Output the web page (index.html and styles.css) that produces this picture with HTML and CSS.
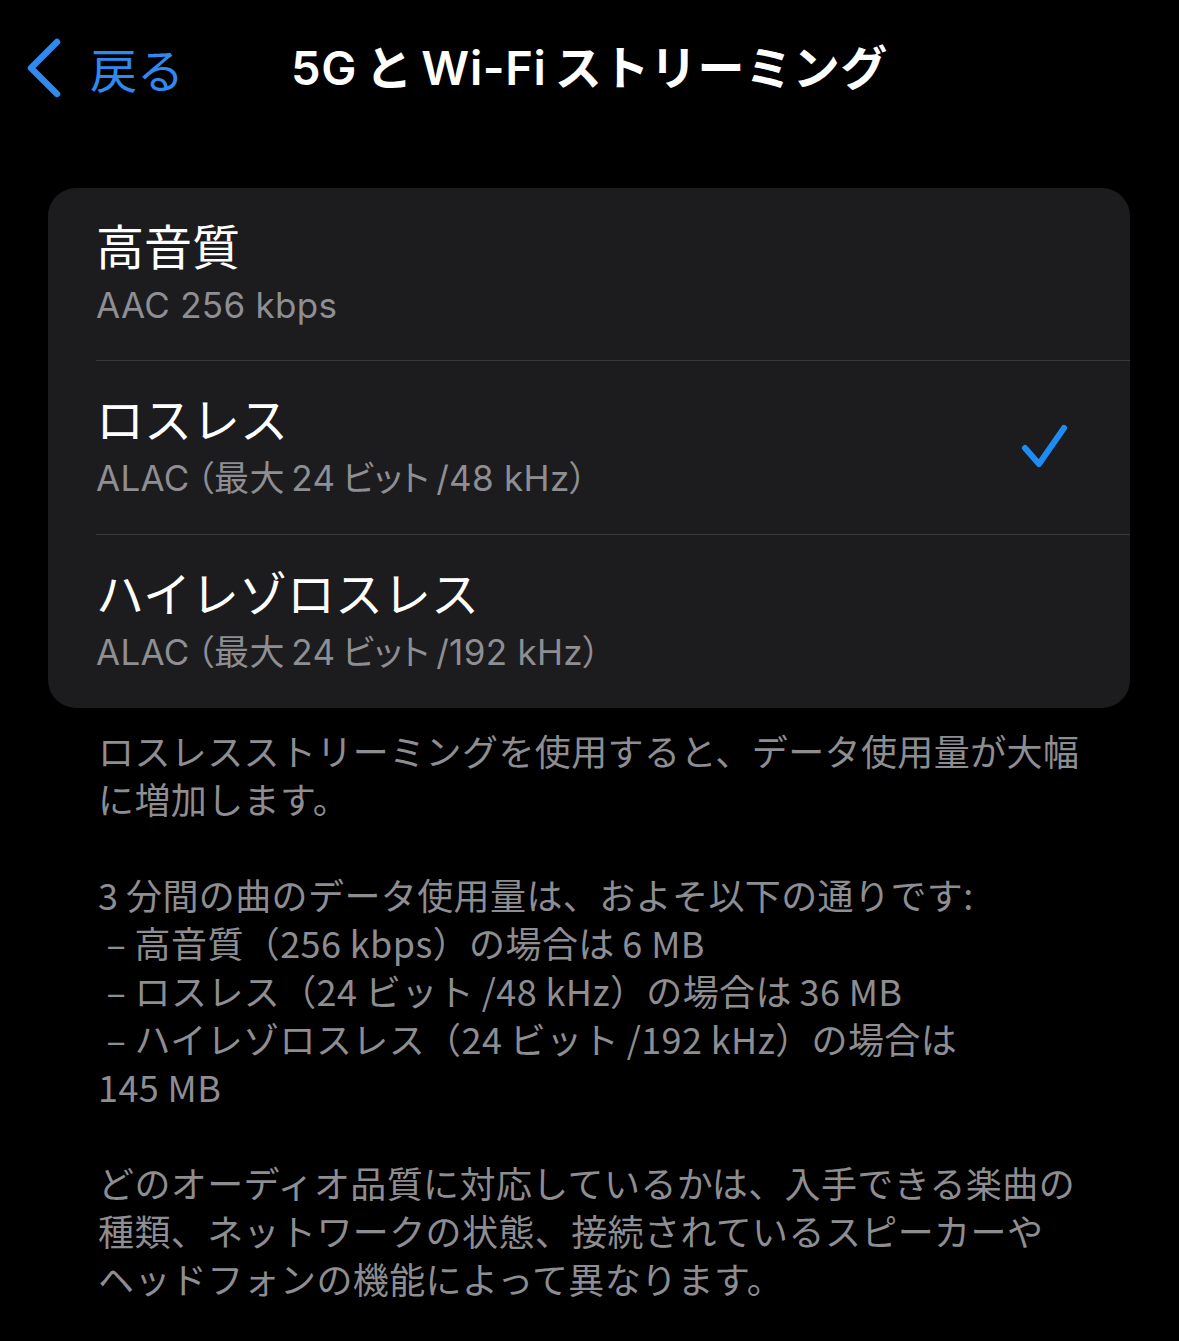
FILE: index.html
```html
<!DOCTYPE html>
<html lang="ja">
<head>
<meta charset="utf-8">
<title>5GとWi-Fiストリーミング</title>
<link rel="stylesheet" href="styles.css">
</head>
<body>
<header class="nav">
  <a class="back">
    <svg class="chevron" width="40" height="60" viewBox="0 0 40 60"><path d="M33 4 L7 30 L33 56" fill="none" stroke="#2f89ee" stroke-width="6.5" stroke-linecap="round" stroke-linejoin="round"/></svg>
    <span class="back-label">戻る</span>
  </a>
  <h1 class="title">5G&#8201;と&#8201;Wi-Fi&#8201;ストリーミング</h1>
</header>

<section class="card">
  <div class="row">
    <div class="row-text">
      <div class="row-title">高音質</div>
      <div class="row-sub">AAC 256 kbps</div>
    </div>
  </div>
  <div class="row">
    <div class="row-text">
      <div class="row-title">ロスレス</div>
      <div class="row-sub">ALAC&#8201;（最大&#8201;24&#8201;ビット&#8201;/48 kHz）</div>
    </div>
    <svg class="check" width="52" height="52" viewBox="0 0 52 52"><path d="M5 25 L19 41 L44 5" fill="none" stroke="#1e8cf5" stroke-width="6" stroke-linecap="round" stroke-linejoin="round"/></svg>
  </div>
  <div class="row">
    <div class="row-text">
      <div class="row-title">ハイレゾロスレス</div>
      <div class="row-sub">ALAC&#8201;（最大&#8201;24&#8201;ビット&#8201;/192 kHz）</div>
    </div>
  </div>
</section>

<p class="footer">ロスレスストリーミングを使用すると、データ使用量が大幅<br>に増加します。<br><br>3&#8201;分間の曲のデータ使用量は、およそ以下の通りです:<br>&nbsp;–&nbsp;高音質（256 kbps）の場合は&#8201;6 MB<br>&nbsp;–&nbsp;ロスレス（24&#8201;ビット&#8201;/48 kHz）の場合は&#8201;36 MB<br>&nbsp;–&nbsp;ハイレゾロスレス（24&#8201;ビット&#8201;/192 kHz）の場合は<br>145 MB<br><br>どのオーディオ品質に対応しているかは、入手できる楽曲の<br>種類、ネットワークの状態、接続されているスピーカーや<br>ヘッドフォンの機能によって異なります。</p>
</body>
</html>
```

FILE: styles.css
```css
html, body {
  margin: 0;
  padding: 0;
  background: #000;
}
body {
  width: 1179px;
  height: 1341px;
  overflow: hidden;
  font-family: "Inter", "Noto Sans CJK JP", sans-serif;
  color: #fff;
}
.nav {
  position: relative;
  height: 136px;
  display: flex;
  align-items: center;
  justify-content: center;
}
.back {
  position: absolute;
  left: 24px;
  top: 38px;
  display: flex;
  align-items: center;
  gap: 26px;
  color: #2f89ee;
}
.back-label {
  font-family: "Noto Sans CJK JP", sans-serif;
  font-size: 47px;
  line-height: 60px;
}
.title {
  margin: 0;
  font-size: 47px;
  font-weight: 600;
  line-height: 60px;
  letter-spacing: 0.6px;
}
.card {
  margin: 52px 49px 0 48px;
  background: #1c1c1e;
  border-radius: 28px;
  overflow: hidden;
}
.row {
  height: 174px;
  margin-left: 48px;
  padding-right: 58px;
  display: flex;
  align-items: flex-start;
  justify-content: space-between;
  border-top: 1px solid #38383a;
  box-sizing: border-box;
}
.row:first-child {
  border-top: none;
  height: 172px;
}
.row-text {
  padding-top: 26px;
}
.row-title {
  font-family: "Noto Sans CJK JP", sans-serif;
  font-size: 48px;
  line-height: 60px;
}
.row-sub {
  margin-top: 9px;
  font-size: 35px;
  line-height: 44px;
  letter-spacing: 0.3px;
  color: #8e8e93;
  font-feature-settings: "palt";
}
.check {
  align-self: center;
  margin-top: 2px;
}
.footer {
  margin: 18px 60px 0 98px;
  font-family: "Noto Sans CJK JP", sans-serif;
  font-size: 36px;
  line-height: 48px;
  letter-spacing: 0.4px;
  color: #8d8d92;
  white-space: nowrap;
}
```
